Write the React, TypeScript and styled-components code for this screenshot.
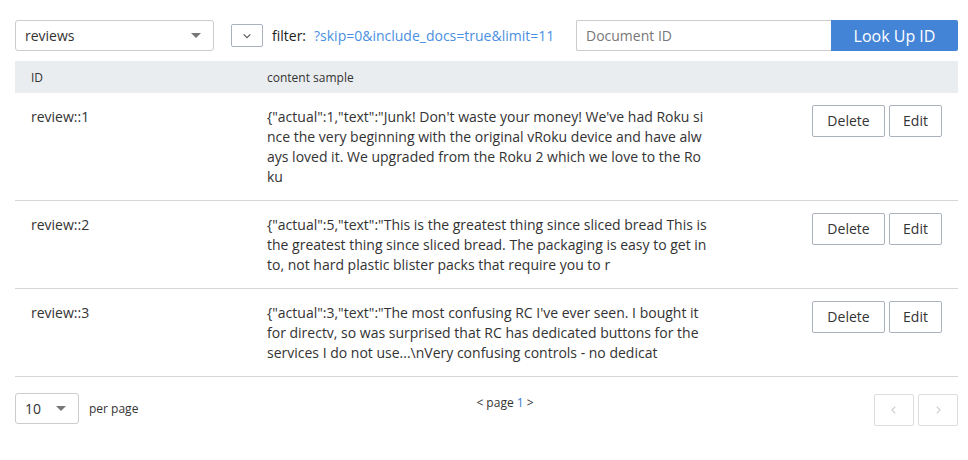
import React from "react";
import styled, { createGlobalStyle } from "styled-components";

const Global = createGlobalStyle`
  html, body { margin: 0; padding: 0; background: #fff; }
  body { font-family: "Open Sans", "Noto Sans", sans-serif; color: #333; }
  * { box-sizing: border-box; }
`;

const Page = styled.div`
  padding: 20px 10px 0 15px;
  width: 968px;
`;

const Toolbar = styled.div`
  display: flex;
  align-items: center;
  height: 31px;
`;

const Select = styled.div<{ $w: number }>`
  width: ${(p) => p.$w}px;
  height: 31px;
  border: 1px solid #ccc;
  border-radius: 3px;
  display: flex;
  align-items: center;
  justify-content: space-between;
  padding: 0 12px 0 9px;
  font-size: 14px;
  color: #333;
  background: #fff;
`;

const Caret = styled.span`
  width: 0;
  height: 0;
  border-left: 5px solid transparent;
  border-right: 5px solid transparent;
  border-top: 5px solid #777;
`;

const ToggleButton = styled.div`
  width: 32px;
  height: 23px;
  margin-left: 17px;
  border: 1px solid #aab2bd;
  border-radius: 2px;
  display: flex;
  align-items: center;
  justify-content: center;
`;

const FilterLabel = styled.span`
  margin-left: 9px;
  font-size: 14px;
  color: #222;
`;

const FilterLink = styled.span`
  margin-left: 8px;
  font-size: 14px;
  color: #4a90e2;
`;

const LookupGroup = styled.div`
  margin-left: auto;
  display: flex;
  height: 31px;
`;

const LookupInput = styled.div`
  width: 255px;
  height: 31px;
  border: 1px solid #ccc;
  border-right: none;
  border-radius: 2px 0 0 2px;
  display: flex;
  align-items: center;
  padding-left: 9px;
  font-size: 14px;
  color: #777;
`;

const LookupButton = styled.div`
  width: 127px;
  height: 31px;
  background: #4384d6;
  color: #fff;
  font-size: 16px;
  display: flex;
  align-items: center;
  justify-content: center;
  border-radius: 0 2px 2px 0;
`;

const Table = styled.div`
  margin-top: 10px;
  width: 943px;
`;

const Grid = `
  display: grid;
  grid-template-columns: 236px 474px 1fr;
`;

const HeaderRow = styled.div`
  ${Grid}
  height: 32px;
  background: #eaedf0;
  align-items: center;
  font-size: 12px;
  color: #333;
`;

const HeaderCell = styled.div`
  padding-left: 16px;
`;

const Row = styled.div`
  ${Grid}
  border-bottom: 1px solid #d6d6d6;
  font-size: 14px;
  line-height: 20px;
  color: #333;
`;

const IdCell = styled.div`
  padding: 14px 16px 13px;
`;

const ContentCell = styled.div`
  padding: 14px 16px 13px 16px;
  word-break: break-all;
`;

const ContentLine = styled.div`
  white-space: nowrap;
`;

const ActionsCell = styled.div`
  display: flex;
  justify-content: flex-end;
  gap: 4px;
  padding: 12px 16px 0 0;
  align-items: flex-start;
`;

const ActionButton = styled.div<{ $w: number }>`
  width: ${(p) => p.$w}px;
  height: 32px;
  border: 1px solid #aab2bd;
  border-radius: 2px;
  display: flex;
  align-items: center;
  justify-content: center;
  font-size: 14px;
  color: #333;
  line-height: 1;
`;

const Footer = styled.div`
  display: flex;
  align-items: flex-start;
  margin-top: 16px;
  width: 943px;
`;

const PerPage = styled.div`
  display: flex;
  align-items: center;
  width: 200px;
`;

const PerPageLabel = styled.span`
  margin-left: 10px;
  font-size: 12px;
  color: #333;
`;

const PageInfo = styled.div`
  flex: 1;
  text-align: center;
  font-size: 12px;
  color: #333;
  padding-top: 1px;
  padding-right: 79px;
`;

const PageNum = styled.span`
  color: #3a7bd5;
`;

const Pager = styled.div`
  display: flex;
  gap: 4px;
  padding-top: 1px;
`;

const PagerButton = styled.div`
  width: 40px;
  height: 32px;
  border: 1px solid #ddd;
  border-radius: 2px;
  display: flex;
  align-items: center;
  justify-content: center;
`;

const Chevron = ({ dir, color, size = 10 }: { dir: "down" | "left" | "right"; color: string; size?: number }) => {
  const d =
    dir === "down" ? "M2 4 L6 8 L10 4" : dir === "left" ? "M7.5 2 L3.5 6 L7.5 10" : "M4.5 2 L8.5 6 L4.5 10";
  return (
    <svg width={size} height={size} viewBox="0 0 12 12">
      <path d={d} fill="none" stroke={color} strokeWidth="1.3" />
    </svg>
  );
};

const rows = [
  {
    id: "review::1",
    lines: [
      `{"actual":1,"text":"Junk! Don't waste your money! We've had Roku si`,
      `nce the very beginning with the original vRoku device and have alw`,
      `ays loved it. We upgraded from the Roku 2 which we love to the Ro`,
      `ku`,
    ],
  },
  {
    id: "review::2",
    lines: [
      `{"actual":5,"text":"This is the greatest thing since sliced bread This is`,
      `the greatest thing since sliced bread. The packaging is easy to get in`,
      `to, not hard plastic blister packs that require you to r`,
    ],
  },
  {
    id: "review::3",
    lines: [
      `{"actual":3,"text":"The most confusing RC I've ever seen. I bought it`,
      `for directv, so was surprised that RC has dedicated buttons for the`,
      `services I do not use...\\nVery confusing controls - no dedicat`,
    ],
  },
];

export default function App() {
  return (
    <>
      <Global />
      <Page>
        <Toolbar>
          <Select $w={199}>
            reviews
            <Caret />
          </Select>
          <ToggleButton>
            <Chevron dir="down" color="#555" />
          </ToggleButton>
          <FilterLabel>filter:</FilterLabel>
          <FilterLink>?skip=0&amp;include_docs=true&amp;limit=11</FilterLink>
          <LookupGroup>
            <LookupInput>Document ID</LookupInput>
            <LookupButton>Look Up ID</LookupButton>
          </LookupGroup>
        </Toolbar>
        <Table>
          <HeaderRow>
            <HeaderCell>ID</HeaderCell>
            <HeaderCell>content sample</HeaderCell>
            <HeaderCell />
          </HeaderRow>
          {rows.map((r) => (
            <Row key={r.id}>
              <IdCell>{r.id}</IdCell>
              <ContentCell>
                {r.lines.map((l, i) => (
                  <ContentLine key={i}>{l}</ContentLine>
                ))}
              </ContentCell>
              <ActionsCell>
                <ActionButton $w={73}>Delete</ActionButton>
                <ActionButton $w={53}>Edit</ActionButton>
              </ActionsCell>
            </Row>
          ))}
        </Table>
        <Footer>
          <PerPage>
            <Select $w={64}>
              10
              <Caret />
            </Select>
            <PerPageLabel>per page</PerPageLabel>
          </PerPage>
          <PageInfo>
            &lt; page <PageNum>1</PageNum> &gt;
          </PageInfo>
          <Pager>
            <PagerButton>
              <Chevron dir="left" color="#ccc" />
            </PagerButton>
            <PagerButton>
              <Chevron dir="right" color="#ccc" />
            </PagerButton>
          </Pager>
        </Footer>
      </Page>
    </>
  );
}
